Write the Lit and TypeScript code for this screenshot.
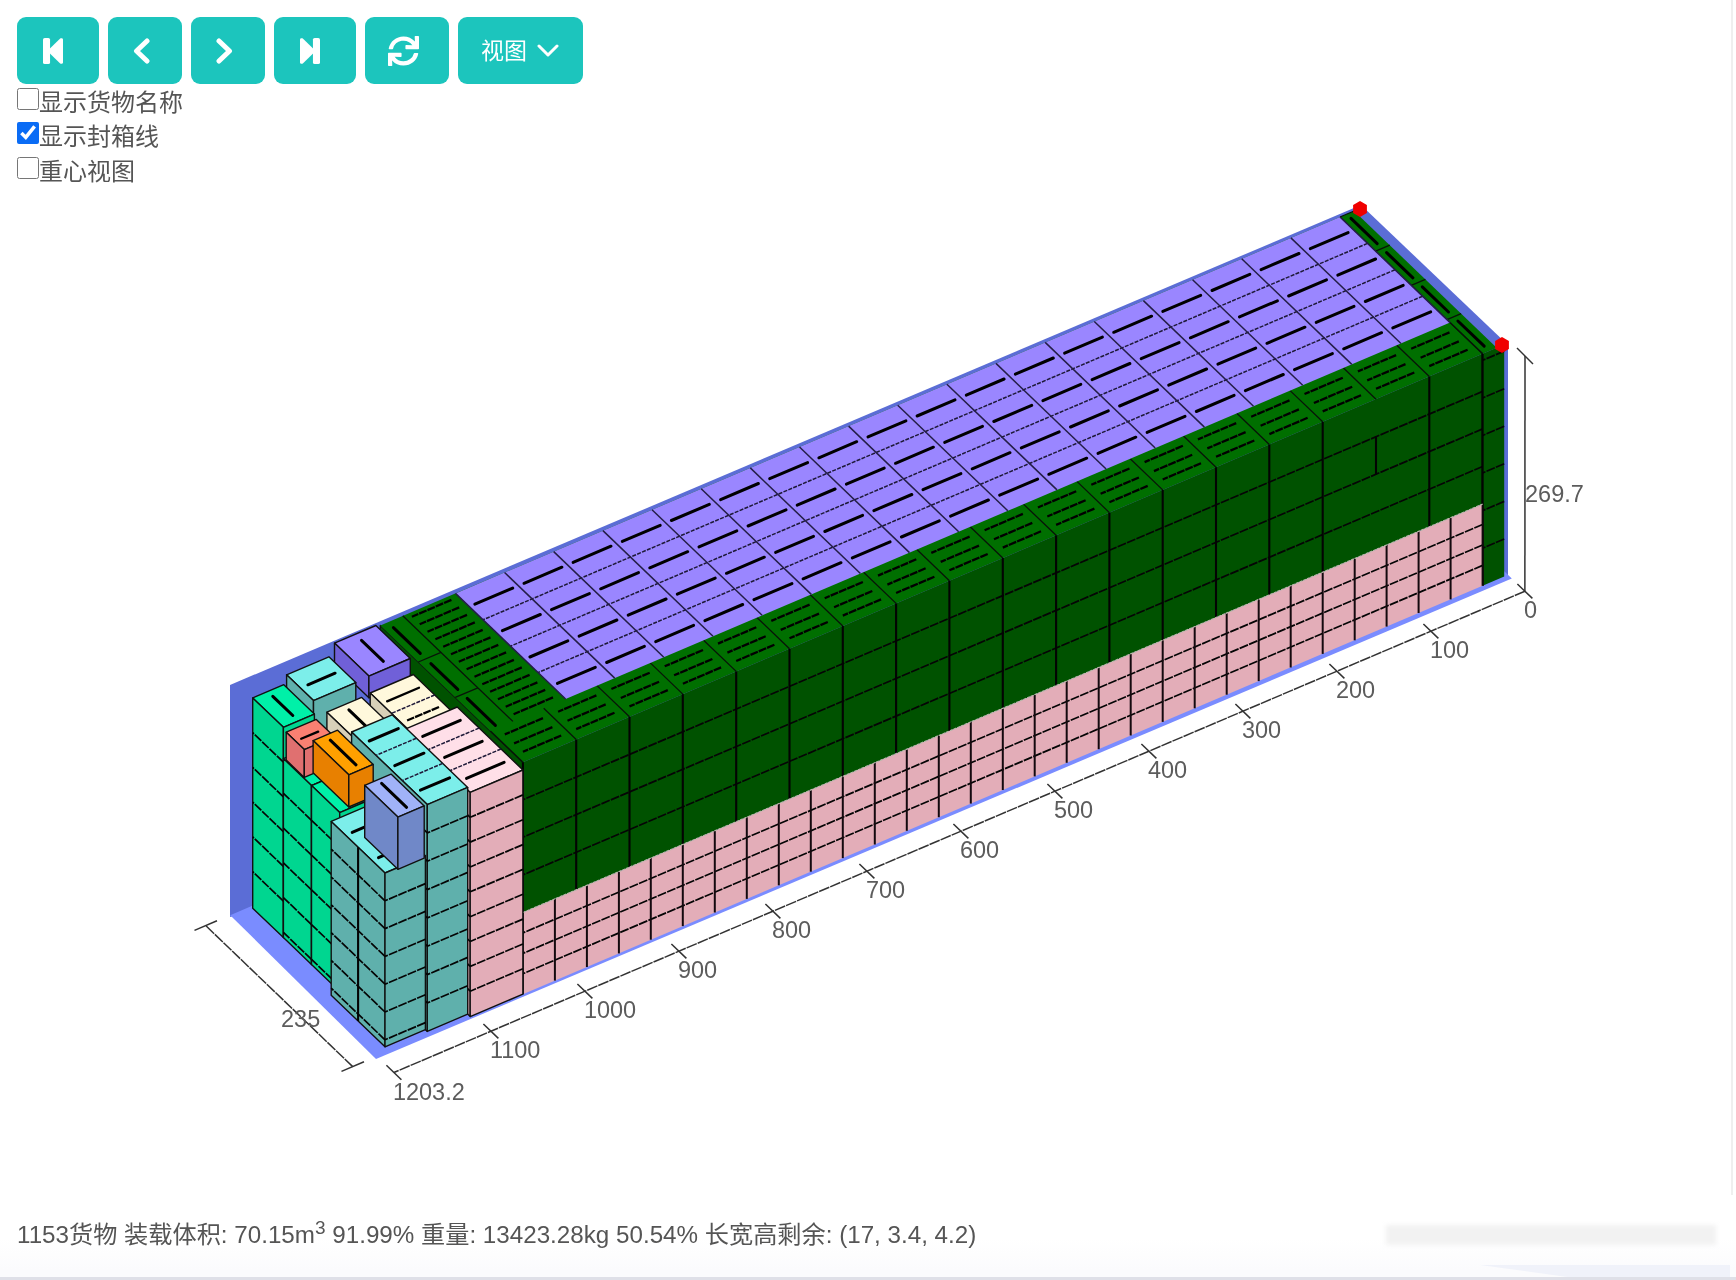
import { LitElement, html, svg, css } from "lit";
import { customElement } from "lit/decorators.js";

type Pt = [number, number];
const P = (l: number, w: number, h: number): Pt => [1508 - 0.94 * l - 0.6255 * w, 575 + 0.4 * l - 0.6 * w - 0.869 * h];
const pts = (...p: Pt[]) => p.map((q) => `${q[0].toFixed(1)},${q[1].toFixed(1)}`).join(" ");
const poly = (fill: string, cls: string, ...p: Pt[]) => svg`<polygon points=${pts(...p)} fill=${fill} class=${cls}></polygon>`;
const ln = (a: Pt, b: Pt, cls: string) => svg`<line x1=${a[0].toFixed(1)} y1=${a[1].toFixed(1)} x2=${b[0].toFixed(1)} y2=${b[1].toFixed(1)} class=${cls}></line>`;

const C = {
  wall: "#5b6dd6", floor: "#7a8cff",
  gFace: "#005200", gTop: "#006f00",
  pFace: "#e3adb8", pTop: "#ffdfe8",
  purple: "#9a86ff", purpleFace: "#7060d8",
  tTop: "#7ceeea", tFace: "#5fb0ac",
  mTop: "#00f0a8", mFace: "#00d690",
  cTop: "#fff8dc", cFace: "#d8d0b8",
  oTop: "#ffa000", oFace: "#e88000",
  sTop: "#fa8072", sFace: "#e07070",
  bTop: "#a0b2f8", bFace: "#7088c8",
};

interface Box { l0: number; l1: number; w0: number; w1: number; h0: number; h1: number; top: string; side: string; rowH?: number; }
const box = (b: Box) => {
  const out = [
    poly(b.top, "edge", P(b.l0, b.w0, b.h1), P(b.l1, b.w0, b.h1), P(b.l1, b.w1, b.h1), P(b.l0, b.w1, b.h1)),
    poly(b.side, "edge", P(b.l1, b.w0, b.h0), P(b.l1, b.w1, b.h0), P(b.l1, b.w1, b.h1), P(b.l1, b.w0, b.h1)),
    poly(b.side, "edge", P(b.l0, b.w0, b.h0), P(b.l1, b.w0, b.h0), P(b.l1, b.w0, b.h1), P(b.l0, b.w0, b.h1)),
  ];
  if (b.rowH) {
    for (let h = b.h1 - b.rowH; h > b.h0 + 4; h -= b.rowH) {
      out.push(ln(P(b.l1, b.w0, h), P(b.l1, b.w1, h), "seam"));
      out.push(ln(P(b.l0, b.w0, h), P(b.l1, b.w0, h), "seam"));
    }
  }
  return out;
};
const sealL = (l0: number, l1: number, w: number, h: number, cls = "seal") => ln(P(l0, w, h), P(l1, w, h), cls);
const sealW = (l: number, w0: number, w1: number, h: number, cls = "seal") => ln(P(l, w0, h), P(l, w1, h), cls);

function scene() {
  const o: unknown[] = [];
  const H = 267;
  const pinkH = 94;
  const gRow = (H - pinkH) / 4;

  // container walls and floor
  o.push(poly(C.wall, "", [230, 917], [1508, 575], [1508, 345], [1361, 205], [230, 685]));
  o.push(poly(C.floor, "", P(1203, 235, 0), [376, 1059], P(0, -6, 0), P(0, 235, 0)));

  // main green block
  const G0 = 27, G1 = 1048, gStep = (G1 - G0) / 18;
  o.push(poly(C.gFace, "edge", P(G1, 0, pinkH), P(G1, 228, pinkH), P(G1, 228, H), P(G1, 0, H)));
  o.push(poly(C.gTop, "", P(12, 0, H), P(G1, 0, H), P(G1, 228, H), P(12, 228, H)));
  o.push(poly(C.gFace, "", P(G0, 0, pinkH), P(G1, 0, pinkH), P(G1, 0, H), P(G0, 0, H)));
  for (let k = 1; k < 4; k++) o.push(ln(P(G0, 0, pinkH + k * gRow), P(G1, 0, pinkH + k * gRow), "seam"));
  for (let i = 0; i <= 18; i++) {
    const l = G0 + i * gStep;
    if (i === 2) o.push(ln(P(l, 0, pinkH + 2 * gRow), P(l, 0, pinkH + 3 * gRow), "post"));
    else o.push(ln(P(l, 0, pinkH), P(l, 0, H), "post"));
    o.push(ln(P(l, 0, H), P(l, 52, H), "edgeLine"));
    if (i < 18) {
      for (const w of [12, 26, 41]) o.push(sealL(l + 8, l + gStep - 8, w, H, "seal thin dash"));
    }
  }

  // far end column
  o.push(poly(C.gFace, "", P(4, 0, 0), P(G0, 0, 0), P(G0, 0, H), P(4, 0, H)));
  for (let h = gRow; h < H - 4; h += gRow) o.push(ln(P(4, 0, h), P(G0, 0, h), "seam"));
  o.push(ln(P(G0, 0, 0), P(G0, 0, H), "post"));
  for (let k = 0; k < 4; k++) {
    const a = k * 57;
    o.push(sealW(20, a + 8, a + 50, H));
    o.push(ln(P(12, a + 57, H), P(G0, a + 57, H), "edgeLine"));
  }
  o.push(ln(P(G0, 0, H), P(G0, 228, H), "edgeLine"));

  // pink lower band
  o.push(poly(C.pFace, "", P(G0, 0, 0), P(G1, 0, 0), P(G1, 0, pinkH), P(G0, 0, pinkH)));
  const pStep = (G1 - G0) / 30;
  for (let k = 1; k < 4; k++) o.push(ln(P(G0, 0, (k * pinkH) / 4), P(G1, 0, (k * pinkH) / 4), "seam"));
  for (let i = 0; i <= 30; i++) {
    const l = G0 + i * pStep;
    o.push(ln(P(l, 0, 0), P(l, 0, pinkH), "postThin"));
  }
  o.push(ln(P(G0, 0, pinkH), P(G1, 0, pinkH), "pinkEdge"));

  // purple top
  const U0 = 27, U1 = 968, uStep = (U1 - U0) / 18, W0 = 52, W1 = 228, wStep = (W1 - W0) / 4;
  o.push(poly(C.purple, "", P(U0, W0, H), P(U1, W0, H), P(U1, W1, H), P(U0, W1, H)));
  for (let k = 1; k < 4; k++) o.push(ln(P(U0, W0 + k * wStep, H), P(U1, W0 + k * wStep, H), "seam soft"));
  for (let i = 0; i < 18; i++) {
    const l = U0 + i * uStep;
    o.push(ln(P(l, W0, H), P(l, W1, H), "edgeLine soft"));
    for (let k = 0; k < 4; k++) o.push(sealL(l + 6, l + uStep - 6, W0 + (k + 0.5) * wStep, H));
  }
  o.push(ln(P(U1, W0, H), P(U1, W1, H), "edgeLine soft"));

  // near-end green strips
  for (let w = 60; w < 228; w += 12.5) o.push(sealL(U1 + 8, 1018, w, H, "seal thin dash"));
  o.push(ln(P(1024, 52, H), P(1024, 228, H), "edgeLine"));
  for (const [a, b] of [[56, 101], [116, 159], [176, 219]]) o.push(sealW(1040, a, b, H));
  for (const w of [108, 167]) o.push(ln(P(1024, w, H), P(G1, w, H), "edgeLine"));

  // near-end stacks (back to front)
  o.push(...box({ l0: 1050, l1: 1094, w0: 177, w1: 232, h0: 240, h1: 265, top: C.purple, side: C.purpleFace }));
  o.push(sealW(1072, 187, 222, 265));
  o.push(...box({ l0: 1100, l1: 1145, w0: 189, w1: 232, h0: 205, h1: 252, top: C.tTop, side: C.tFace }));
  o.push(sealL(1108, 1137, 210, 252));
  o.push(...box({ l0: 1050, l1: 1096, w0: 105, w1: 172, h0: 200, h1: 250, top: C.cTop, side: C.cFace }));
  o.push(sealL(1056, 1090, 154, 250, "seal thin"), sealL(1056, 1090, 122, 250, "seal thin dash"));
  o.push(ln(P(1050, 138, 250), P(1096, 138, 250), "seam soft"));
  o.push(...box({ l0: 1048, l1: 1104, w0: 0, w1: 105, h0: 0, h1: 258, top: C.pTop, side: C.pFace, rowH: 28.6 }));
  for (const w of [18, 53, 88]) o.push(sealL(1056, 1096, w, 258));
  for (const w of [35, 70]) o.push(ln(P(1048, w, 258), P(1104, w, 258), "seam soft"));
  o.push(...box({ l0: 1099, l1: 1136, w0: 125, w1: 181, h0: 190, h1: 240, top: C.cTop, side: C.cFace }));
  o.push(sealW(1118, 133, 173, 240));
  o.push(...box({ l0: 1148, l1: 1181, w0: 183, w1: 232, h0: 0, h1: 242, top: C.mTop, side: C.mFace, rowH: 40 }));
  o.push(sealW(1165, 192, 224, 242));
  o.push(...box({ l0: 1104, l1: 1147, w0: 4, w1: 125, h0: 0, h1: 261, top: C.tTop, side: C.tFace, rowH: 32.6 }));
  for (const w of [24, 65, 106]) o.push(sealL(1110, 1141, w, 261));
  for (const w of [44, 86]) o.push(ln(P(1104, w, 261), P(1147, w, 261), "seam soft"));
  o.push(...box({ l0: 1136, l1: 1181, w0: 138, w1: 183, h0: 0, h1: 206, top: C.mTop, side: C.mFace, rowH: 40 }));
  o.push(...box({ l0: 1147, l1: 1181, w0: 93, w1: 138, h0: 0, h1: 206, top: C.mTop, side: C.mFace, rowH: 40 }));
  o.push(...box({ l0: 1148, l1: 1180, w0: 151, w1: 180, h0: 206, h1: 238, top: C.sTop, side: C.sFace }));
  o.push(sealL(1156, 1174, 165, 238, "seal thin"));
  o.push(...box({ l0: 1144, l1: 1170, w0: 95, w1: 152, h0: 206, h1: 243, top: C.oTop, side: C.oFace }));
  o.push(sealW(1157, 103, 144, 243));
  o.push(...box({ l0: 1147, l1: 1190, w0: 7, w1: 93, h0: 0, h1: 200, top: C.tTop, side: C.tFace, rowH: 32 }));
  o.push(ln(P(1190, 50, 0), P(1190, 50, 200), "post"));
  for (const w of [28, 70]) o.push(sealL(1155, 1183, w, 200));
  o.push(...box({ l0: 1151, l1: 1179, w0: 3, w1: 56, h0: 202, h1: 262, top: C.bTop, side: C.bFace }));
  o.push(sealW(1165, 10, 50, 262));

  // red corner markers
  const hex = (x: number, y: number) => {
    const r = 8;
    const p: Pt[] = [];
    for (let i = 0; i < 6; i++) p.push([x + r * Math.sin((i * Math.PI) / 3), y + r * Math.cos((i * Math.PI) / 3)]);
    return poly("#f00000", "", ...p);
  };
  o.push(hex(1360, 209), hex(1502, 345));

  // axes
  const off = -27;
  o.push(ln(P(0, off, 0), P(1203.2, off, 0), "axis dashy"));
  const ticks = [0, 100, 200, 300, 400, 500, 600, 700, 800, 900, 1000, 1100, 1203.2];
  for (const t of ticks) {
    o.push(ln(P(t, off + 12, 0), P(t, off - 12, 0), "axis"));
    const q = P(t, off, 0);
    o.push(svg`<text x=${(q[0] - 1).toFixed(1)} y=${(q[1] + 27).toFixed(1)} class="tick">${t}</text>`);
  }
  o.push(ln(P(0, off, 0), [1525, 356], "axis"));
  o.push(ln([1517, 348], [1533, 364], "axis"));
  o.push(svg`<text x="1525" y="502" class="tick">269.7</text>`);
  o.push(ln(P(1229, 0, 0), P(1229, 235, 0), "axis dashy"));
  o.push(ln(P(1217, 0, 0), P(1241, 0, 0), "axis"));
  o.push(ln(P(1217, 235, 0), P(1241, 235, 0), "axis"));
  o.push(svg`<text x="281" y="1027" class="tick">235</text>`);
  return o;
}

@customElement("app-root")
export class AppRoot extends LitElement {
  static styles = css`
    :host {
      display: flex;
      flex-direction: column;
      position: relative;
      width: 1736px;
      height: 1280px;
      background: #fff;
      overflow: hidden;
      font-family: "Liberation Sans", "Noto Sans CJK SC", sans-serif;
      color: #555;
    }
    .toolbar {
      display: flex;
      gap: 9px;
      padding: 17px 0 0 16.5px;
      height: 67px;
      filter: blur(0.35px);
    }
    .btn {
      display: flex;
      align-items: center;
      justify-content: center;
      height: 67px;
      border: none;
      border-radius: 9px;
      background: #1cc5bd;
      color: #fff;
      padding: 0;
      font: 23px "Liberation Sans", "Noto Sans CJK SC", sans-serif;
    }
    .b1 { width: 82px; }
    .b1 svg { margin-right: 9px; }
    .b2 { width: 74px; }
    .b2 svg { margin-right: 7px; }
    .b3 { width: 74px; }
    .b3 svg { margin-right: 7px; }
    .b4 { width: 82px; }
    .b4 svg { margin-right: 9px; }
    .b5 { width: 84px; }
    .b5 svg { margin-right: 6px; }
    .b6 { width: 125px; gap: 10px; }
    .b6 span { padding-bottom: 4px; }
    .options {
      display: flex;
      flex-direction: column;
      height: 107px;
      margin-top: -1px;
      padding-left: 17px;
      font-size: 24px;
      filter: blur(0.45px);
    }
    .opt {
      display: flex;
      align-items: center;
      height: 34.5px;
    }
    .opt input {
      width: 22px;
      height: 22px;
      margin: 0 0 3px 0;
      accent-color: #0a6cf5;
    }
    .stage {
      display: block;
      width: 1736px;
      height: 1010px;
      filter: blur(0.55px);
    }
    .edge { stroke: #111; stroke-width: 1.4; stroke-linejoin: round; }
    .seam { stroke: #050505; stroke-width: 1.7; stroke-dasharray: 9 1.2; fill: none; }
    .seam.soft { stroke: #1e1938; stroke-width: 1.5; stroke-dasharray: 4 1.3; }
    .post { stroke: #030303; stroke-width: 2.1; }
    .postThin { stroke: #14090e; stroke-width: 2; }
    .edgeLine { stroke: #081408; stroke-width: 1.3; }
    .edgeLine.soft { stroke: #241e48; stroke-width: 1.5; }
    .pinkEdge { stroke: #b8b8a8; stroke-width: 1.2; stroke-dasharray: 3 1; }
    .seal { stroke: #000; stroke-width: 3; stroke-linecap: round; }
    .seal.thin { stroke-width: 2.3; }
    .seal.dash { stroke-dasharray: 8 1; stroke-linecap: butt; }
    .axis { stroke: #333; stroke-width: 1.5; fill: none; }
    .axis.dashy { stroke-dasharray: 11 1; }
    .tick {
      font: 23.5px "Liberation Sans", sans-serif;
      fill: #5c5c5c;
    }
    .status {
      height: 70px;
      padding-left: 17px;
      line-height: 70px;
      font-size: 24.2px;
      white-space: nowrap;
      background: linear-gradient(#fff 55%, #fbfbfd);
    }
    .txt { filter: blur(0.45px); display: inline-block; }
    .status sup { font-size: 19px; line-height: 0; }
    .foot {
      flex: 1;
      background: #fbfbfd;
      border-bottom: 3px solid #dfe0e8;
    }
    .smudge {
      position: absolute;
      left: 1386px;
      top: 1225px;
      width: 330px;
      height: 20px;
      background: #f2f2f2;
      filter: blur(2px);
    }
    .wedge {
      position: absolute;
      left: 1480px;
      top: 1265px;
      width: 250px;
      height: 12px;
      background: #f0f2fa;
      clip-path: polygon(0 0, 100% 0, 100% 100%, 35% 100%);
    }
    .rail {
      position: absolute;
      left: 1731px;
      top: 0;
      width: 2px;
      height: 1195px;
      background: #efefef;
    }
  `;

  render() {
    return html`
      <div class="toolbar">
        <button class="btn b1">
          <svg width="20" height="26" viewBox="0 0 17 26" preserveAspectRatio="none"><rect x="0" y="0" width="6" height="26" rx="1.5" fill="#fff"></rect><path d="M5 11.5 14.6.6c.8-.8 2.400-.3 2.400 1v22.800c0 1.300-1.600 1.800-2.400 1L5 14.500z" fill="#fff"></path></svg>
        </button>
        <button class="btn b2">
          <svg width="17" height="26" viewBox="0 0 17 26"><path d="M14 3 3.500 13 14 23" fill="none" stroke="#fff" stroke-width="5" stroke-linecap="round" stroke-linejoin="round"></path></svg>
        </button>
        <button class="btn b3">
          <svg width="17" height="26" viewBox="0 0 17 26"><path d="M3 3l10.500 10L3 23" fill="none" stroke="#fff" stroke-width="5" stroke-linecap="round" stroke-linejoin="round"></path></svg>
        </button>
        <button class="btn b4">
          <svg width="20" height="26" viewBox="0 0 17 26" preserveAspectRatio="none"><rect x="11" y="0" width="6" height="26" rx="1.500" fill="#fff"></rect><path d="M12 11.500 2.400.6C1.600-.2 0 .3 0 1.600v22.800c0 1.300 1.600 1.800 2.400 1L12 14.500z" fill="#fff"></path></svg>
        </button>
        <button class="btn b5">
          <svg width="31" height="30" viewBox="0 0 512 512" preserveAspectRatio="none"><path fill="#fff" d="M440.65 12.57l4 82.77A247.16 247.16 0 0 0 255.83 8C134.73 8 33.91 94.92 12.29 209.82A12 12 0 0 0 24.09 224h49.05a12 12 0 0 0 11.67-9.26 175.91 175.91 0 0 1 317-56.94l-101.46-4.86a12 12 0 0 0-12.57 12v47.41a12 12 0 0 0 12 12H500a12 12 0 0 0 12-12V12a12 12 0 0 0-12-12h-47.37a12 12 0 0 0-11.98 12.57zM255.83 432a175.61 175.61 0 0 1-146-77.8l101.8 4.87a12 12 0 0 0 12.57-12v-47.4a12 12 0 0 0-12-12H12a12 12 0 0 0-12 12V500a12 12 0 0 0 12 12h47.35a12 12 0 0 0 12-12.6l-4.15-82.57A247.17 247.17 0 0 0 255.83 504c121.11 0 221.93-86.92 243.55-201.82a12 12 0 0 0-11.8-14.18h-49.05a12 12 0 0 0-11.67 9.26A175.86 175.86 0 0 1 255.83 432z"></path></svg>
        </button>
        <button class="btn b6">
          <span>视图</span>
          <svg width="22" height="13" viewBox="0 0 22 13"><path d="M2 2l9 9 9-9" fill="none" stroke="#fff" stroke-width="3" stroke-linecap="round" stroke-linejoin="round"></path></svg>
        </button>
      </div>
      <div class="options">
        <label class="opt"><input type="checkbox" />显示货物名称</label>
        <label class="opt"><input type="checkbox" checked />显示封箱线</label>
        <label class="opt"><input type="checkbox" />重心视图</label>
      </div>
      <svg class="stage" viewBox="0 190 1736 1010">${scene()}</svg>
      <div class="status"><span class="txt">1153货物 装载体积: 70.15m<sup>3</sup> 91.99% 重量: 13423.28kg 50.54% 长宽高剩余: (17, 3.4, 4.2)</span></div>
      <div class="foot"></div>
      <div class="smudge"></div>
      <div class="wedge"></div>
      <div class="rail"></div>
    `;
  }
}
